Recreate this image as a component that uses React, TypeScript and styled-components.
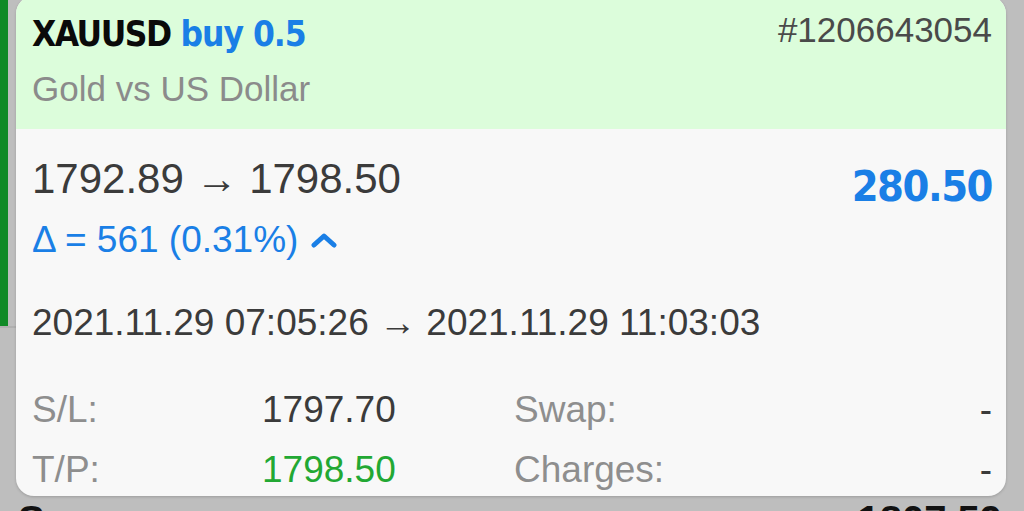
import styled, { createGlobalStyle } from 'styled-components';

const GlobalStyle = createGlobalStyle`
  html, body {
    margin: 0;
    padding: 0;
    background: #bebebe;
    overflow: hidden;
  }
  * {
    box-sizing: border-box;
  }
`;

const Screen = styled.div`
  width: 1024px;
  height: 511px;
  overflow: hidden;
  display: grid;
  grid-template-columns: 16px 990px 18px;
  grid-template-rows: auto auto;
  background: #bebebe;
  font-family: 'Liberation Sans', Arial, sans-serif;
`;

const SideRail = styled.div`
  display: flex;
  align-self: start;
  height: 328px;
  border-bottom: 2px solid #b0b0b0;
`;

const AccentBar = styled.div`
  width: 8px;
  background: #108a26;
`;

const Card = styled.div`
  margin-top: -4px;
  border-radius: 18px;
  overflow: hidden;
  background: #f8f8f8;
  box-shadow: 0 1px 3px rgba(0, 0, 0, 0.18);
  height: 500px;
`;

const Header = styled.div`
  display: flex;
  justify-content: space-between;
  align-items: flex-start;
  background: #dcfddb;
  padding: 16px 14px 20px 16px;
`;

const TitleBlock = styled.div`
  display: flex;
  flex-direction: column;
`;

const Title = styled.div`
  font-family: 'DejaVu Sans Condensed', 'DejaVu Sans', sans-serif;
  font-weight: 700;
  font-size: 35px;
  letter-spacing: -1.5px;
  line-height: 44px;
  color: #0a0a0a;
  white-space: nowrap;
`;

const Side = styled.span`
  color: #1a7fe6;
  letter-spacing: -1px;
`;

const Subtitle = styled.div`
  margin-top: 13px;
  font-size: 35px;
  line-height: 40px;
  color: #8b8b8b;
`;

const OrderNo = styled.div`
  font-size: 35px;
  line-height: 36px;
  color: #4a4a4a;
`;

const Body = styled.div`
  padding: 25px 14px 0 16px;
`;

const PriceRow = styled.div`
  display: flex;
  justify-content: space-between;
  align-items: flex-start;
`;

const PriceBlock = styled.div`
  display: flex;
  flex-direction: column;
`;

const Prices = styled.div`
  font-size: 42px;
  line-height: 50px;
  color: #3b3b3b;
  white-space: nowrap;
`;

const Delta = styled.div`
  margin-top: 15px;
  display: flex;
  align-items: center;
  gap: 13px;
  font-size: 37px;
  line-height: 42px;
  color: #1a7fe6;
`;

const Profit = styled.div`
  margin-top: 7px;
  font-family: 'DejaVu Sans Condensed', 'DejaVu Sans', sans-serif;
  font-weight: 700;
  font-size: 43px;
  letter-spacing: -1.5px;
  line-height: 50px;
  color: #1a7fe6;
`;

const Dates = styled.div`
  margin-top: 40px;
  font-size: 37px;
  line-height: 44px;
  color: #3b3b3b;
  white-space: nowrap;
`;

const InfoGrid = styled.div`
  margin-top: 39px;
  display: grid;
  grid-template-columns: 230px 252px 1fr auto;
  row-gap: 8px;
  font-size: 37px;
  line-height: 52px;
`;

const Label = styled.div`
  color: #8e8e8e;
`;

const Value = styled.div<{ $tone?: 'dark' | 'green' }>`
  color: ${({ $tone }) => ($tone === 'green' ? '#22a833' : '#3b3b3b')};
  text-align: ${({ $tone }) => ($tone ? 'left' : 'right')};
`;

const Behind = styled.div`
  grid-column: 1 / 4;
  display: flex;
  justify-content: space-between;
  padding: 0 22px 0 18px;
  margin-top: 2px;
  font-size: 40px;
  font-weight: 700;
  line-height: 44px;
  color: #111;
`;

const Chevron = () => (
  <svg width="26" height="16" viewBox="0 0 26 16">
    <path
      d="M3 13 L13 4 L23 13"
      fill="none"
      stroke="#1a7fe6"
      strokeWidth="5"
      strokeLinecap="round"
      strokeLinejoin="round"
    />
  </svg>
);

const App = () => {
  return (
    <>
      <GlobalStyle />
      <Screen>
        <SideRail>
          <AccentBar />
        </SideRail>
        <Card>
          <Header>
            <TitleBlock>
              <Title>
                XAUUSD<Side> buy 0.5</Side>
              </Title>
              <Subtitle>Gold vs US Dollar</Subtitle>
            </TitleBlock>
            <OrderNo>#1206643054</OrderNo>
          </Header>
          <Body>
            <PriceRow>
              <PriceBlock>
                <Prices>1792.89 → 1798.50</Prices>
                <Delta>
                  <span>Δ = 561 (0.31%)</span>
                  <Chevron />
                </Delta>
              </PriceBlock>
              <Profit>280.50</Profit>
            </PriceRow>
            <Dates>2021.11.29 07:05:26 → 2021.11.29 11:03:03</Dates>
            <InfoGrid>
              <Label>S/L:</Label>
              <Value $tone="dark">1797.70</Value>
              <Label>Swap:</Label>
              <Value>-</Value>
              <Label>T/P:</Label>
              <Value $tone="green">1798.50</Value>
              <Label>Charges:</Label>
              <Value>-</Value>
            </InfoGrid>
          </Body>
        </Card>
        <div />
        <Behind>
          <span>Swap</span>
          <span>1807.59</span>
        </Behind>
      </Screen>
    </>
  );
};

export default App;
